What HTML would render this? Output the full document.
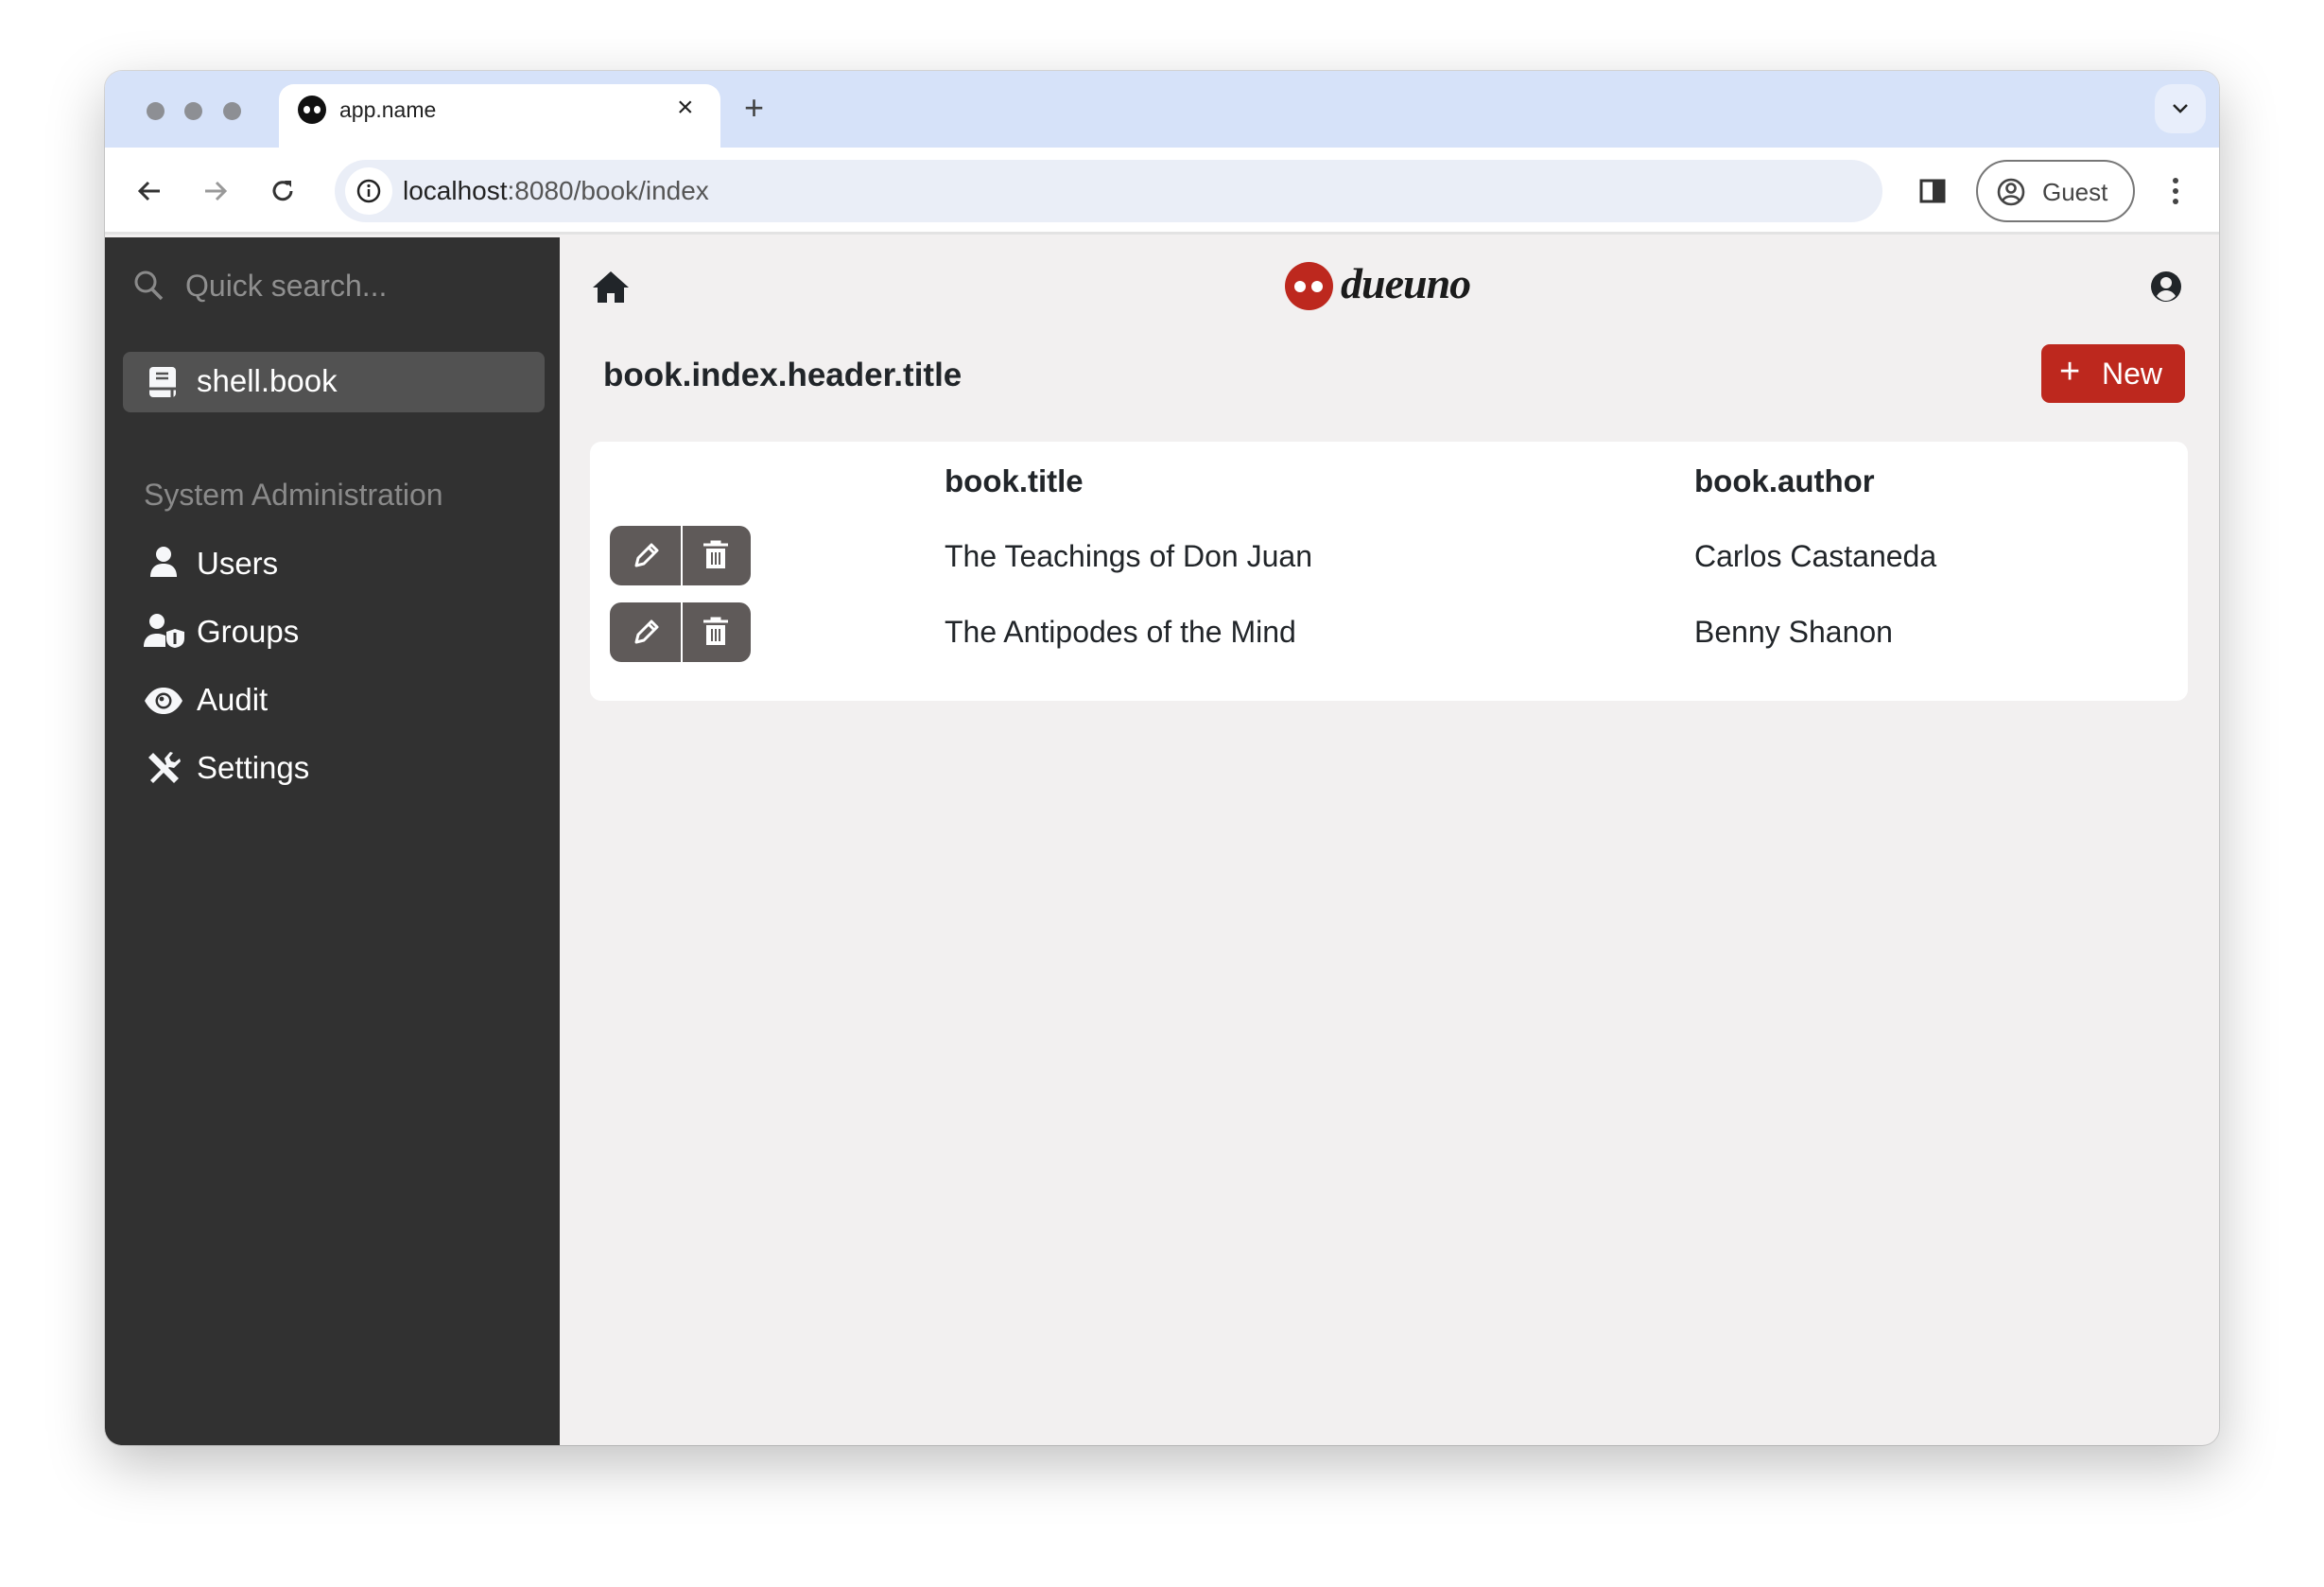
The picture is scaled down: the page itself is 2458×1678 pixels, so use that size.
<!DOCTYPE html>
<html><head><meta charset="utf-8"><style>
*{margin:0;padding:0;box-sizing:border-box}
body{width:2458px;height:1678px;background:#fff;font-family:"Liberation Sans",Arial,sans-serif;position:relative;overflow:hidden}
.a{position:absolute}
.win{left:111px;top:75px;width:2236px;height:1453px;border-radius:18px;overflow:hidden;box-shadow:0 20px 60px rgba(0,0,0,.25),0 0 0 1px rgba(0,0,0,.12);background:#f2f0f0}
.t{white-space:nowrap}
.nav{left:97px;color:#fff;font-size:33px}
.btn{width:149px;height:63px;border-radius:12px;background:#5f5a59;overflow:hidden}
</style></head><body>
<div class="a win">
  <div class="a" style="left:0;top:0;width:2236px;height:81px;background:#d6e2f9"></div>
  <div class="a" style="left:44px;top:33px;width:19px;height:19px;border-radius:50%;background:#8d8f94"></div>
  <div class="a" style="left:84px;top:33px;width:19px;height:19px;border-radius:50%;background:#8d8f94"></div>
  <div class="a" style="left:125px;top:33px;width:19px;height:19px;border-radius:50%;background:#8d8f94"></div>
  <div class="a" style="left:184px;top:14px;width:467px;height:70px;background:#fff;border-radius:16px 16px 0 0"></div>
  <div class="a" style="left:204px;top:26px;width:30px;height:30px;border-radius:50%;background:#111"></div>
  <div class="a" style="left:210px;top:37px;width:7px;height:8px;border-radius:50%;background:#fff"></div>
  <div class="a" style="left:221px;top:37px;width:7px;height:8px;border-radius:50%;background:#fff"></div>
  <div class="a t" style="left:248px;top:28px;font-size:23px;color:#222">app.name</div>
  <div class="a t" style="left:605px;top:22px;font-size:30px;color:#222">×</div>
  <div class="a t" style="left:676px;top:18px;font-size:36px;color:#444;font-weight:300">+</div>
  <div class="a" style="left:2168px;top:14px;width:54px;height:52px;border-radius:18px;background:#e8eefb"></div>
  <svg class="a" style="left:2185px;top:31px" width="20" height="18"><path d="M3 5l7 7 7-7" stroke="#222" stroke-width="2.5" fill="none"/></svg>
  <div class="a" style="left:0;top:81px;width:2236px;height:92px;background:#fff;border-bottom:3px solid #e3e3e3"></div>
  <svg class="a" style="left:32px;top:112px" width="30" height="30"><path d="M26 15H6M14 6l-9 9 9 9" stroke="#333" stroke-width="3" fill="none"/></svg>
  <svg class="a" style="left:102px;top:112px" width="30" height="30"><path d="M4 15h20M16 6l9 9-9 9" stroke="#999" stroke-width="3" fill="none"/></svg>
  <svg class="a" style="left:173px;top:112px" width="30" height="30"><path d="M24 15a9 9 0 1 1-3-7" stroke="#333" stroke-width="3" fill="none"/><path d="M17 4h7v7z" fill="#333"/></svg>
  <div class="a" style="left:243px;top:94px;width:1637px;height:66px;border-radius:33px;background:#eaeef7"></div>
  <div class="a" style="left:254px;top:102px;width:50px;height:50px;border-radius:50%;background:#fff"></div>
  <svg class="a" style="left:266px;top:114px" width="26" height="26"><circle cx="13" cy="13" r="11" stroke="#222" stroke-width="2.5" fill="none"/><path d="M13 11v8" stroke="#222" stroke-width="2.5"/><circle cx="13" cy="7.5" r="1.6" fill="#222"/></svg>
  <div class="a t" style="left:315px;top:111px;font-size:28px;color:#222">localhost<span style="color:#555">:8080/book/index</span></div>
  <svg class="a" style="left:1918px;top:112px" width="30" height="30"><rect x="3" y="4" width="24" height="22" stroke="#333" stroke-width="3" fill="none"/><rect x="15" y="4" width="12" height="22" fill="#333"/></svg>
  <div class="a" style="left:1979px;top:94px;width:168px;height:66px;border-radius:33px;border:2px solid #777"></div>
  <svg class="a" style="left:2000px;top:112px" width="32" height="32"><circle cx="16" cy="16" r="13" stroke="#444" stroke-width="2.6" fill="none"/><circle cx="16" cy="12" r="4.5" stroke="#444" stroke-width="2.6" fill="none"/><path d="M7 25c4-6 14-6 18 0" stroke="#444" stroke-width="2.6" fill="none"/></svg>
  <div class="a t" style="left:2049px;top:113px;font-size:26px;color:#444">Guest</div>
  <div class="a" style="left:2187px;top:113px;width:6px;height:6px;border-radius:50%;background:#444"></div>
  <div class="a" style="left:2187px;top:124px;width:6px;height:6px;border-radius:50%;background:#444"></div>
  <div class="a" style="left:2187px;top:135px;width:6px;height:6px;border-radius:50%;background:#444"></div>
  <div class="a" style="left:0;top:176px;width:481px;height:1277px;background:#313131"></div>
  <svg class="a" style="left:30px;top:210px" width="34" height="36"><circle cx="13" cy="13" r="10" stroke="#8a8a8a" stroke-width="3" fill="none"/><path d="M20 21l10 10" stroke="#8a8a8a" stroke-width="3.5"/></svg>
  <div class="a t" style="left:85px;top:209px;font-size:32px;color:#8f8f8f">Quick search...</div>
  <div class="a" style="left:19px;top:297px;width:446px;height:64px;border-radius:8px;background:#525252"></div>
  <svg class="a" style="left:45px;top:312px" width="32" height="34"><rect x="2" y="1" width="28" height="32" rx="4" fill="#f6f7f9"/><path d="M9 8h13M9 13h13" stroke="#525252" stroke-width="2.5"/><path d="M2 24h28" stroke="#525252" stroke-width="3"/><path d="M26 24v9" stroke="#525252" stroke-width="3"/></svg>
  <div class="a t nav" style="top:309px">shell.book</div>
  <div class="a t" style="left:41px;top:430px;font-size:32px;color:#8a8a8a">System Administration</div>
  <svg class="a" style="left:45px;top:502px" width="34" height="34"><circle cx="17" cy="9" r="8" fill="#f6f7f9"/><path d="M3 33c0-9 5-14 14-14s14 5 14 14z" fill="#f6f7f9"/></svg>
  <div class="a t nav" style="top:502px">Users</div>
  <svg class="a" style="left:41px;top:573px" width="44" height="38"><circle cx="14" cy="9" r="8" fill="#f6f7f9"/><path d="M0 36c0-9 5-14 14-14 4 0 6 1 9 2v12z" fill="#f6f7f9"/><path d="M33 17l10 3v7c0 6-4 9-10 10-6-1-9-4-9-10v-7z" fill="#f6f7f9"/><path d="M33 21v12" stroke="#313131" stroke-width="3"/></svg>
  <div class="a t nav" style="top:574px">Groups</div>
  <svg class="a" style="left:41px;top:651px" width="42" height="30"><path d="M1 15C7 4 14 1 21 1s14 3 20 14c-6 11-13 14-20 14S7 26 1 15z" fill="#f6f7f9"/><circle cx="21" cy="15" r="8.5" fill="#313131"/><circle cx="21" cy="15" r="6" fill="#f6f7f9"/><circle cx="19" cy="13" r="2.4" fill="#313131"/></svg>
  <div class="a t nav" style="top:646px">Audit</div>
  <svg class="a" style="left:43px;top:718px" width="38" height="38"><path d="M3 8l5-5 27 27-5 5z" fill="#f6f7f9"/><path d="M5 32L22 15l-2-6 6-7 3 1-4 5 2 4 4 1 5-4 1 3-7 7-5-1L8 35z" fill="#f6f7f9"/></svg>
  <div class="a t nav" style="top:718px">Settings</div>
  <svg class="a" style="left:515px;top:210px" width="40" height="36"><path d="M20 2L1 19h5v16h10v-10h8v10h10V19h5z" fill="#212529"/></svg>
  <div class="a" style="left:1248px;top:202px;width:51px;height:51px;border-radius:50%;background:#bd281e"></div>
  <div class="a" style="left:1258px;top:222px;width:12px;height:12px;border-radius:50%;background:#fff"></div>
  <div class="a" style="left:1276px;top:222px;width:12px;height:12px;border-radius:50%;background:#fff"></div>
  <div class="a t" style="left:1307px;top:198px;font-size:46px;font-family:'Liberation Serif',serif;font-style:italic;font-weight:bold;color:#1b1b1b;letter-spacing:-1px">dueuno</div>
  <svg class="a" style="left:2163px;top:211px" width="34" height="34"><circle cx="17" cy="17" r="16" fill="#212529"/><circle cx="17" cy="13" r="6" fill="#f2f0f0"/><path d="M7 27c3-5 7-6 10-6s7 1 10 6c-3 3-6 5-10 5s-7-2-10-5z" fill="#f2f0f0"/></svg>
  <div class="a t" style="left:527px;top:302px;font-size:35px;font-weight:bold;color:#212529">book.index.header.title</div>
  <div class="a" style="left:2048px;top:289px;width:152px;height:62px;border-radius:9px;background:#bd281e"></div>
  <div class="a t" style="left:2067px;top:297px;font-size:38px;color:#fff;font-weight:300">+</div>
  <div class="a t" style="left:2112px;top:302px;font-size:32px;color:#fff">New</div>
  <div class="a" style="left:513px;top:392px;width:1690px;height:274px;border-radius:12px;background:#fff"></div>
  <div class="a t" style="left:888px;top:415px;font-size:33px;font-weight:bold;color:#212529">book.title</div>
  <div class="a t" style="left:1681px;top:415px;font-size:33px;font-weight:bold;color:#212529">book.author</div>
  <div class="a btn" style="left:534px;top:481px"></div>
  <div class="a btn" style="left:534px;top:562px"></div>
  <div class="a" style="left:609px;top:481px;width:2px;height:144px;background:#fff"></div>
  <div class="a" style="left:609px;top:544px;width:2px;height:18px;background:#fff"></div>
  <svg class="a" style="left:556px;top:497px" width="32" height="32"><path d="M6 26l2-8L22 4l6 6-14 14z" stroke="#fff" stroke-width="3" fill="none" stroke-linejoin="round"/><path d="M19 7l6 6" stroke="#fff" stroke-width="3"/></svg>
  <svg class="a" style="left:556px;top:578px" width="32" height="32"><path d="M6 26l2-8L22 4l6 6-14 14z" stroke="#fff" stroke-width="3" fill="none" stroke-linejoin="round"/><path d="M19 7l6 6" stroke="#fff" stroke-width="3"/></svg>
  <svg class="a" style="left:631px;top:496px" width="30" height="32"><path d="M2 5h26M11 5V2h8v3" stroke="#fff" stroke-width="3" fill="none"/><path d="M5 9h20v21H5z" fill="#fff"/><path d="M11 13v13M15 13v13M19 13v13" stroke="#5f5a59" stroke-width="2"/></svg>
  <svg class="a" style="left:631px;top:577px" width="30" height="32"><path d="M2 5h26M11 5V2h8v3" stroke="#fff" stroke-width="3" fill="none"/><path d="M5 9h20v21H5z" fill="#fff"/><path d="M11 13v13M15 13v13M19 13v13" stroke="#5f5a59" stroke-width="2"/></svg>
  <div class="a t" style="left:888px;top:495px;font-size:32px;color:#212529">The Teachings of Don Juan</div>
  <div class="a t" style="left:1681px;top:495px;font-size:32px;color:#212529">Carlos Castaneda</div>
  <div class="a t" style="left:888px;top:575px;font-size:32px;color:#212529">The Antipodes of the Mind</div>
  <div class="a t" style="left:1681px;top:575px;font-size:32px;color:#212529">Benny Shanon</div>
</div>
</body></html>
